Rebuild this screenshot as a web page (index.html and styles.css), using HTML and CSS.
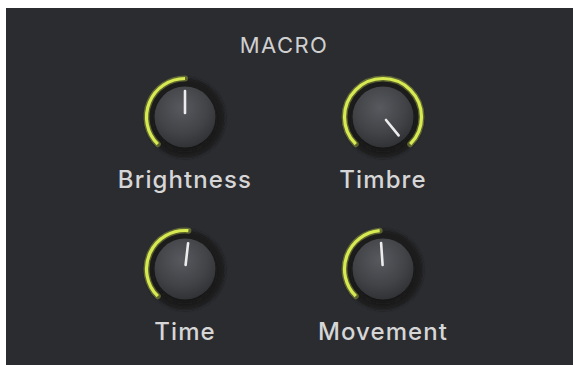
FILE: index.html
```html
<!DOCTYPE html>
<html lang="en">
<head>
<meta charset="utf-8">
<title>Macro</title>
<link rel="stylesheet" href="styles.css">
</head>
<body>
<div class="panel">
  <div class="title">MACRO</div>
  <div class="grid">
    <div class="cell">
      <svg class="knob" width="90" height="90" viewBox="0 0 90 90">
        <defs>
          <radialGradient id="bodyA" cx="45%" cy="35%" r="70%">
            <stop offset="0" stop-color="#58595e"/>
            <stop offset="0.6" stop-color="#424347"/>
            <stop offset="1" stop-color="#2e2f32"/>
          </radialGradient>
          <filter id="blurA" x="-30%" y="-30%" width="160%" height="160%"><feGaussianBlur stdDeviation="1.6"/></filter>
        </defs>
        <circle cx="45" cy="46" r="40" fill="#1a1b1d" filter="url(#blurA)"/>
        <path d="M17.78 72.22 A38.5 38.5 0 0 1 45 6.5" fill="none" stroke="#cfe34a" stroke-opacity="0.35" stroke-width="6" stroke-linecap="round"/>
        <path d="M17.78 72.22 A38.5 38.5 0 0 1 45 6.5" fill="none" stroke="#d7ea52" stroke-width="3.2" stroke-linecap="butt"/>
        <circle cx="45" cy="48" r="31" fill="#151618" filter="url(#blurA)"/>
        <circle cx="45" cy="45" r="30.5" fill="url(#bodyA)"/>
        <line x1="45" y1="41" x2="45" y2="19" stroke="#ececec" stroke-width="2.6" stroke-linecap="round"/>
      </svg>
      <div class="label">Brightness</div>
    </div>
    <div class="cell">
      <svg class="knob" width="90" height="90" viewBox="0 0 90 90">
        <circle cx="45" cy="46" r="40" fill="#1a1b1d" filter="url(#blurA)"/>
        <path d="M17.78 72.22 A38.5 38.5 0 1 1 72.22 72.22" fill="none" stroke="#cfe34a" stroke-opacity="0.35" stroke-width="6" stroke-linecap="round"/>
        <path d="M17.78 72.22 A38.5 38.5 0 1 1 72.22 72.22" fill="none" stroke="#d7ea52" stroke-width="3.2" stroke-linecap="butt"/>
        <circle cx="45" cy="48" r="31" fill="#151618" filter="url(#blurA)"/>
        <circle cx="45" cy="45" r="30.5" fill="url(#bodyA)"/>
        <line x1="48" y1="48" x2="60.6" y2="63.4" stroke="#ececec" stroke-width="2.6" stroke-linecap="round"/>
      </svg>
      <div class="label">Timbre</div>
    </div>
    <div class="cell">
      <svg class="knob" width="90" height="90" viewBox="0 0 90 90">
        <circle cx="45" cy="46" r="40" fill="#1a1b1d" filter="url(#blurA)"/>
        <path d="M17.78 72.22 A38.5 38.5 0 0 1 48.36 6.65" fill="none" stroke="#cfe34a" stroke-opacity="0.35" stroke-width="6" stroke-linecap="round"/>
        <path d="M17.78 72.22 A38.5 38.5 0 0 1 48.36 6.65" fill="none" stroke="#d7ea52" stroke-width="3.2" stroke-linecap="butt"/>
        <circle cx="45" cy="48" r="31" fill="#151618" filter="url(#blurA)"/>
        <circle cx="45" cy="45" r="30.5" fill="url(#bodyA)"/>
        <line x1="45.6" y1="41" x2="48.1" y2="19.2" stroke="#ececec" stroke-width="2.6" stroke-linecap="round"/>
      </svg>
      <div class="label">Time</div>
    </div>
    <div class="cell">
      <svg class="knob" width="90" height="90" viewBox="0 0 90 90">
        <circle cx="45" cy="46" r="40" fill="#1a1b1d" filter="url(#blurA)"/>
        <path d="M17.78 72.22 A38.5 38.5 0 0 1 41.64 6.65" fill="none" stroke="#cfe34a" stroke-opacity="0.35" stroke-width="6" stroke-linecap="round"/>
        <path d="M17.78 72.22 A38.5 38.5 0 0 1 41.64 6.65" fill="none" stroke="#d7ea52" stroke-width="3.2" stroke-linecap="butt"/>
        <circle cx="45" cy="48" r="31" fill="#151618" filter="url(#blurA)"/>
        <circle cx="45" cy="45" r="30.5" fill="url(#bodyA)"/>
        <line x1="44.6" y1="41" x2="43.1" y2="19.1" stroke="#ececec" stroke-width="2.6" stroke-linecap="round"/>
      </svg>
      <div class="label">Movement</div>
    </div>
  </div>
</div>
</body>
</html>
```

FILE: styles.css
```css
html, body {
  margin: 0;
  padding: 0;
  background: #ffffff;
}

body {
  width: 573px;
  height: 365px;
  overflow: hidden;
  font-family: "Inter", "Liberation Sans", sans-serif;
}

.panel {
  margin: 8px 0 0 6px;
  height: 357px;
  box-sizing: border-box;
  padding-right: 11px;
  background: #2b2c30;
  display: flex;
  flex-direction: column;
  align-items: center;
}

.title {
  margin-top: 25px;
  font-size: 22px;
  line-height: 25px;
  font-weight: 400;
  color: #d0d0d1;
  letter-spacing: 1.4px;
}

.grid {
  margin-top: 14px;
  display: grid;
  grid-template-columns: 170px 170px;
  column-gap: 28px;
  row-gap: 30px;
}

.cell {
  display: flex;
  flex-direction: column;
  align-items: center;
}

.knob {
  display: block;
}

.label {
  margin-top: 3px;
  font-size: 24px;
  line-height: 29px;
  font-weight: 500;
  color: #d6d6d7;
  letter-spacing: 1.1px;
  white-space: nowrap;
}
```
